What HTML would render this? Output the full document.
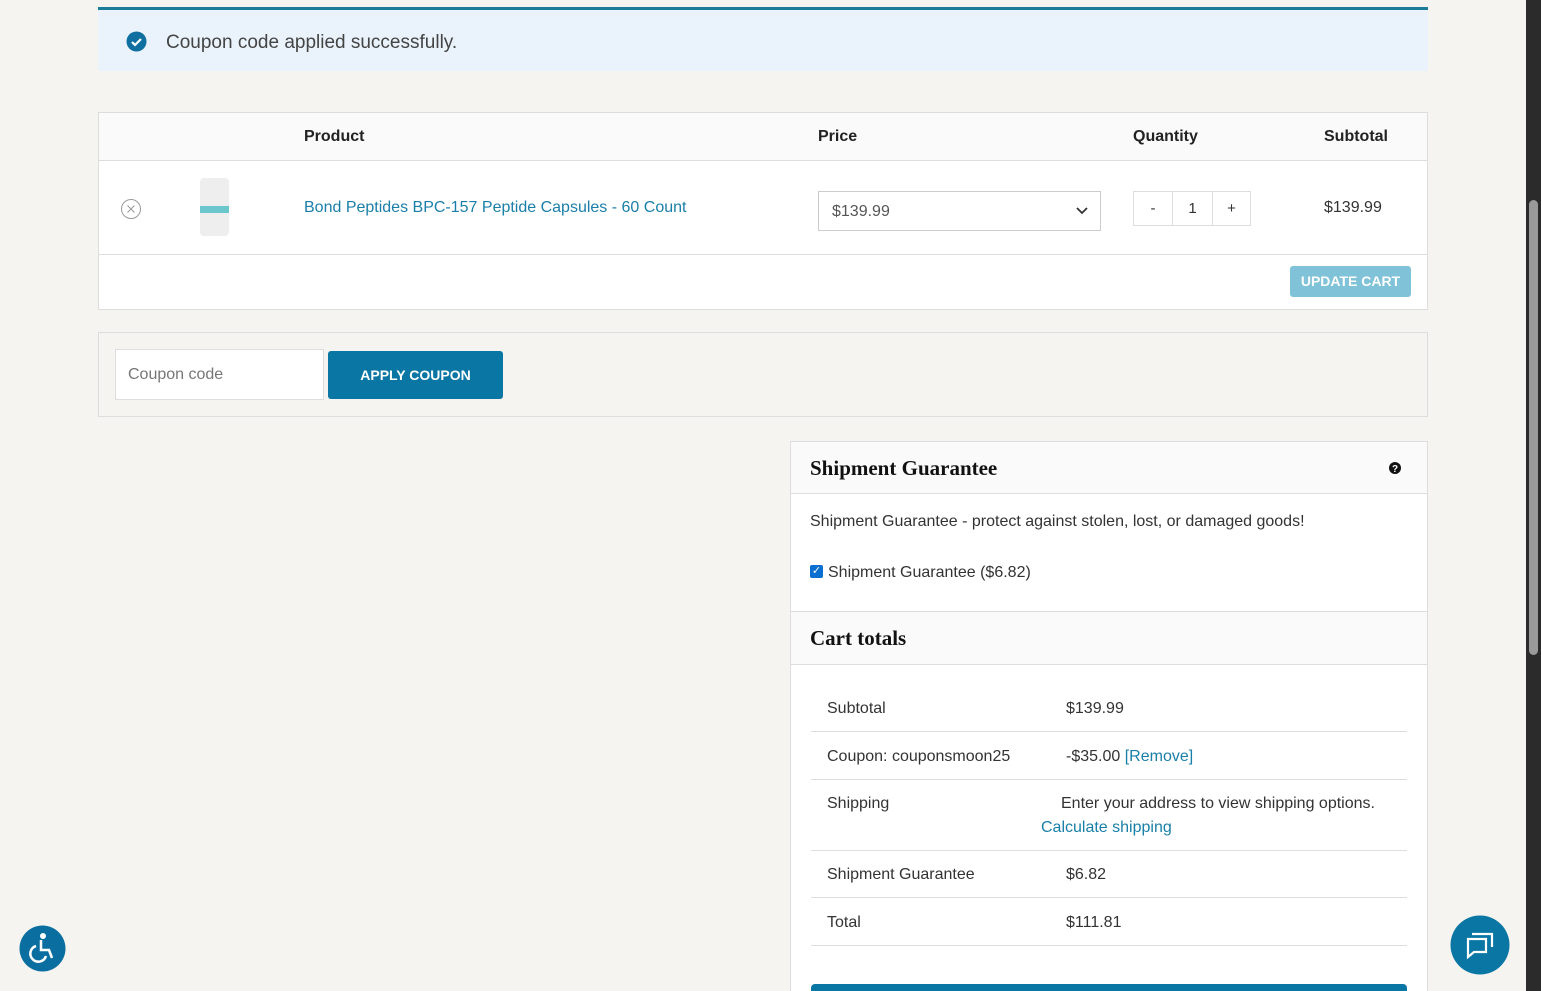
<!DOCTYPE html>
<html style="overflow:hidden"><head><meta charset="utf-8"><style>
*{box-sizing:border-box;margin:0;padding:0}
html,body{width:1541px;height:991px;overflow:hidden}
body{background:#f5f4f0;font-family:"Liberation Sans",sans-serif;color:#333;position:relative;font-size:16px}
.a{position:absolute}
a,.lk{color:#1a7fa8}
.t{margin-top:2px}
.sb{position:absolute;right:0;top:0;width:15px;height:991px;background:#2b2b2b}
.h{color:#222;font-weight:bold;font-size:16px}
</style></head><body>
<div class="a" style="left:98px;top:7px;width:1330px;height:64px;background:#eaf3fc;border-top:3px solid #1b7c9a"></div>
<svg class="a" style="left:126px;top:31px" width="21" height="21"><circle cx="10.5" cy="10.5" r="10" fill="#0e6fa0"/><path d="M6 11l3 3 6-6" stroke="#fff" stroke-width="2.2" fill="none"/></svg>
<div class="a" style="left:166px;top:32px;font-size:19px;color:#444">Coupon code applied successfully.</div>

<div class="a" style="left:98px;top:112px;width:1330px;height:198px;background:#fff;border:1px solid #ddd"></div>
<div class="a" style="left:99px;top:113px;width:1328px;height:48px;background:#fafafa;border-bottom:1px solid #ddd"></div>
<div class="a h" style="left:304px;top:128px">Product</div>
<div class="a h" style="left:818px;top:128px">Price</div>
<div class="a h" style="left:1133px;top:128px">Quantity</div>
<div class="a h" style="left:1324px;top:128px">Subtotal</div>
<svg class="a" style="left:120px;top:198px" width="22" height="22"><circle cx="11" cy="11" r="9.5" fill="none" stroke="#999"/><path d="M7.5 7.5l7 7M14.5 7.5l-7 7" stroke="#999"/></svg>
<div class="a" style="left:200px;top:178px;width:29px;height:58px;background:#eee;border-radius:4px"><div style="margin-top:28px;height:7px;background:#6cc7cc"></div></div>
<div class="a lk" style="left:304px;top:199px">Bond Peptides BPC-157 Peptide Capsules - 60 Count</div>
<div class="a" style="left:818px;top:191px;width:283px;height:40px;border:1px solid #ccc;background:#fff;padding:11px 13px;color:#555">$139.99<svg style="position:absolute;right:12px;top:15px" width="12" height="8"><path d="M1 1l5 5 5-5" stroke="#333" stroke-width="1.8" fill="none"/></svg></div>
<div class="a" style="left:1133px;top:191px;width:118px;height:35px;border:1px solid #ddd;background:#fff;display:flex;font-size:15px"><div style="width:39px;text-align:center;line-height:33px;border-right:1px solid #ddd">-</div><div style="width:40px;text-align:center;line-height:33px;border-right:1px solid #ddd">1</div><div style="flex:1;text-align:center;line-height:33px">+</div></div>
<div class="a" style="left:1324px;top:199px">$139.99</div>
<div class="a" style="left:99px;top:254px;width:1328px;border-top:1px solid #ddd"></div>
<div class="a" style="left:1290px;top:266px;width:121px;height:31px;background:#80c2d8;color:#fff;font-size:14px;font-weight:bold;text-align:center;line-height:31px;border-radius:3px">UPDATE CART</div>

<div class="a" style="left:98px;top:332px;width:1330px;height:85px;border:1px solid #ddd"></div>
<div class="a" style="left:115px;top:349px;width:209px;height:51px;background:#fff;border:1px solid #ddd;padding:16px 12px;color:#777">Coupon code</div>
<div class="a" style="left:328px;top:351px;width:175px;height:48px;background:#0a76a3;color:#fff;font-size:14px;font-weight:bold;text-align:center;line-height:48px;border-radius:3px">APPLY COUPON</div>

<div class="a" style="left:790px;top:441px;width:638px;height:560px;background:#fff;border:1px solid #ddd"></div>
<div class="a" style="left:791px;top:442px;width:636px;height:52px;background:#fafafa;border-bottom:1px solid #ddd"></div>
<div class="a" style="left:810px;top:456px;font-family:'Liberation Serif',serif;font-weight:bold;font-size:21px;color:#111">Shipment Guarantee</div>
<svg class="a" style="left:1389px;top:462px" width="12" height="12"><circle cx="6" cy="6" r="6" fill="#111"/><text x="6" y="10" font-size="10" fill="#fff" text-anchor="middle" font-weight="bold" font-family="Liberation Sans">?</text></svg>
<div class="a" style="left:810px;top:513px">Shipment Guarantee - protect against stolen, lost, or damaged goods!</div>
<div class="a" style="left:810px;top:565px;width:13px;height:13px;background:#0a6fd0;border-radius:2px;color:#fff;font-size:11px;line-height:13px;text-align:center">✓</div>
<div class="a" style="left:828px;top:564px">Shipment Guarantee ($6.82)</div>
<div class="a" style="left:791px;top:611px;width:636px;height:54px;background:#fafafa;border-top:1px solid #ddd;border-bottom:1px solid #ddd"></div>
<div class="a" style="left:810px;top:626px;font-family:'Liberation Serif',serif;font-weight:bold;font-size:21px;color:#111">Cart totals</div>
<div class="a" style="left:827px;top:700px">Subtotal</div><div class="a" style="left:1066px;top:700px">$139.99</div>
<div class="a" style="left:811px;top:731px;width:596px;border-top:1px solid #ddd"></div>
<div class="a" style="left:827px;top:748px">Coupon: couponsmoon25</div><div class="a" style="left:1066px;top:748px">-$35.00 <span class="lk">[Remove]</span></div>
<div class="a" style="left:811px;top:779px;width:596px;border-top:1px solid #ddd"></div>
<div class="a" style="left:827px;top:795px">Shipping</div><div class="a" style="left:1061px;top:795px">Enter your address to view shipping options.</div>
<div class="a lk" style="left:1041px;top:819px">Calculate shipping</div>
<div class="a" style="left:811px;top:850px;width:596px;border-top:1px solid #ddd"></div>
<div class="a" style="left:827px;top:866px">Shipment Guarantee</div><div class="a" style="left:1066px;top:866px">$6.82</div>
<div class="a" style="left:811px;top:897px;width:596px;border-top:1px solid #ddd"></div>
<div class="a" style="left:827px;top:914px">Total</div><div class="a" style="left:1066px;top:914px">$111.81</div>
<div class="a" style="left:811px;top:945px;width:596px;border-top:1px solid #ddd"></div>
<div class="a" style="left:811px;top:984px;width:596px;height:7px;background:#0a76a3;border-radius:4px 4px 0 0"></div>

<svg class="a" style="left:19px;top:925px" width="47" height="47"><circle cx="23.5" cy="23.5" r="23" fill="#0a6fa0"/><circle cx="24" cy="11" r="3" fill="#fff"/><path d="M22 15v10h8l3 8M17 21a8 8 0 1 0 10 10" stroke="#fff" stroke-width="2.5" fill="none"/></svg>
<svg class="a" style="left:1450px;top:915px" width="60" height="60"><circle cx="30" cy="30" r="29.5" fill="#0a76a3"/><path d="M18 24h18v13H24l-6 5z" stroke="#fff" stroke-width="2.2" fill="none"/><path d="M22 19h20v13" stroke="#fff" stroke-width="2.2" fill="none"/></svg>
<div class="sb"><div style="position:absolute;left:3px;top:200px;width:9px;height:455px;background:#9a9a9a;border-radius:5px"></div></div>
</body></html>
